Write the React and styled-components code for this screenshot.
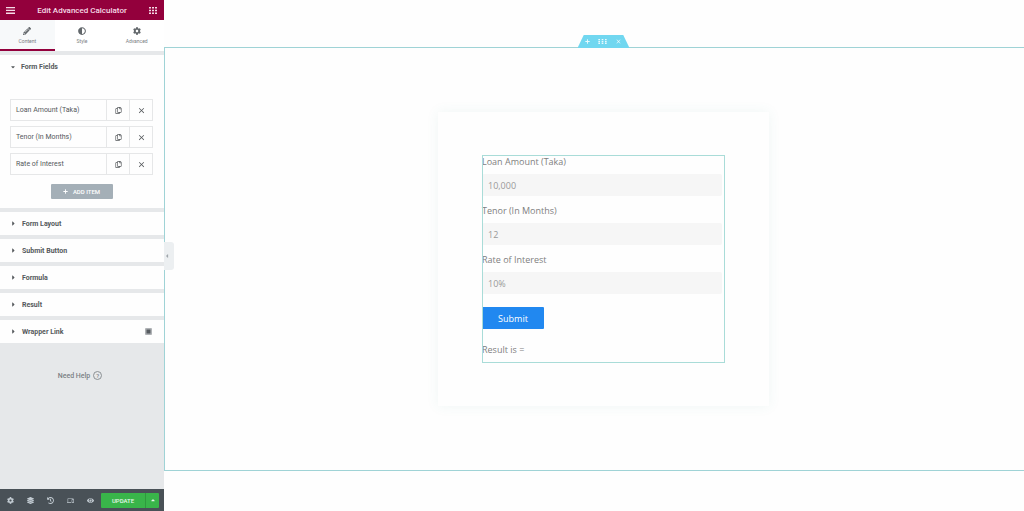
import React from "react";
import styled, { createGlobalStyle } from "styled-components";
import {
  FaAdjust,
  FaCaretDown,
  FaCaretLeft,
  FaCaretRight,
  FaCaretUp,
  FaCog,
  FaEye,
  FaHistory,
  FaLayerGroup,
  FaPencilAlt,
  FaPlus,
  FaRegCopy,
} from "react-icons/fa";
import { MdClose, MdDevices } from "react-icons/md";

const fields = [
  { id: "loan", label: "Loan Amount (Taka)", value: "10,000" },
  { id: "tenor", label: "Tenor (In Months)", value: "12" },
  { id: "rate", label: "Rate of Interest", value: "10%" },
];

const tabs = [
  { label: "Content", Icon: FaPencilAlt },
  { label: "Style", Icon: FaAdjust },
  { label: "Advanced", Icon: FaCog },
];

const sections = ["Form Layout", "Submit Button", "Formula", "Result"];

const tools = [
  { label: "Settings", Icon: FaCog },
  { label: "Navigator", Icon: FaLayerGroup },
  { label: "History", Icon: FaHistory },
  { label: "Responsive Mode", Icon: MdDevices },
  { label: "Preview Changes", Icon: FaEye },
];

function MenuIcon() {
  return (
    <svg width="9" height="7" viewBox="0 0 9 7" fill="currentColor">
      <path d="M0 0h9v1.3H0zM0 2.8h9v1.3H0zM0 5.6h9v1.3H0z" />
    </svg>
  );
}

function GridIcon() {
  return (
    <svg width="8" height="7" viewBox="0 0 8 7" fill="currentColor">
      <path d="M0 0h2v1.6H0zM3 0h2v1.6H3zM6 0h2v1.6H6zM0 2.7h2v1.6H0zM3 2.7h2v1.6H3zM6 2.7h2v1.6H6zM0 5.4h2V7H0zM3 5.4h2V7H3zM6 5.4h2V7H6z" />
    </svg>
  );
}

function AddonIcon() {
  return (
    <svg width="7" height="7" viewBox="0 0 7 7">
      <rect width="7" height="7" rx="1" fill="#b0b3b6" />
      <path d="M1.5 1.5h4v4h-4z" fill="#565b60" />
    </svg>
  );
}

function Sidebar() {
  return (
    <Panel>
      <Header>
        <IconButton aria-label="Menu">
          <MenuIcon />
        </IconButton>
        <h1>Edit Advanced Calculator</h1>
        <IconButton aria-label="Widgets">
          <GridIcon />
        </IconButton>
      </Header>

      <Tabs>
        {tabs.map(({ label, Icon }, i) => (
          <Tab key={label} $active={i === 0}>
            <Icon size={8} />
            {label}
          </Tab>
        ))}
      </Tabs>

      <Sections>
        <Section>
          <SectionTitle>
            <FaCaretDown size={6} />
            Form Fields
          </SectionTitle>
          <Repeater>
            {fields.map((field) => (
              <Item key={field.id}>
                <ItemName>{field.label}</ItemName>
                <ItemTool aria-label={`Duplicate ${field.label}`}>
                  <FaRegCopy size={7} />
                </ItemTool>
                <ItemTool aria-label={`Remove ${field.label}`}>
                  <MdClose size={9} />
                </ItemTool>
              </Item>
            ))}
            <AddItem>
              <FaPlus size={5} />
              ADD ITEM
            </AddItem>
          </Repeater>
        </Section>

        {sections.map((name) => (
          <Section key={name}>
            <SectionTitle>
              <FaCaretRight size={7} />
              {name}
            </SectionTitle>
          </Section>
        ))}
        <Section>
          <SectionTitle>
            <FaCaretRight size={7} />
            <span>Wrapper Link</span>
            <AddonIcon />
          </SectionTitle>
        </Section>
      </Sections>

      <Help href="#help">
        Need Help <HelpMark>?</HelpMark>
      </Help>

      <Footer>
        {tools.map(({ label, Icon }) => (
          <FooterTool key={label} aria-label={label}>
            <Icon size={7} />
          </FooterTool>
        ))}
        <Update>UPDATE</Update>
        <UpdateMore aria-label="Save options">
          <FaCaretUp size={6} />
        </UpdateMore>
      </Footer>

      <Collapse aria-label="Hide panel">
        <FaCaretLeft size={6} />
      </Collapse>
    </Panel>
  );
}

function Calculator() {
  return (
    <Card>
      <Form onSubmit={(e) => e.preventDefault()}>
        {fields.map((field) => (
          <Field key={field.id}>
            <label htmlFor={field.id}>{field.label}</label>
            <input id={field.id} defaultValue={field.value} />
          </Field>
        ))}
        <Submit type="submit">Submit</Submit>
        <ResultText>Result is =</ResultText>
      </Form>
    </Card>
  );
}

function App() {
  return (
    <Editor>
      <GlobalStyle />
      <Sidebar />
      <Preview>
        <Canvas>
          <Handle>
            <button aria-label="Add section">
              <FaPlus size={5} />
            </button>
            <button aria-label="Edit section">
              <Dots viewBox="0 0 10 6">
                <path d="M0 0h2v1.5H0zM4 0h2v1.5H4zM8 0h2v1.5H8zM0 2.3h2v1.5H0zM4 2.3h2v1.5H4zM8 2.3h2v1.5H8zM0 4.5h2V6H0zM4 4.5h2V6H4zM8 4.5h2V6H8z" />
              </Dots>
            </button>
            <button aria-label="Delete section">
              <MdClose size={7} />
            </button>
          </Handle>
          <Calculator />
        </Canvas>
      </Preview>
    </Editor>
  );
}

const GlobalStyle = createGlobalStyle`
  * {
    box-sizing: border-box;
  }
  body {
    margin: 0;
    font-family: Roboto, sans-serif;
    background: #fefefe;
  }
  button {
    display: flex;
    align-items: center;
    justify-content: center;
    padding: 0;
    border: none;
    background: none;
    font-family: inherit;
    color: inherit;
    cursor: pointer;
  }
`;

const Editor = styled.div`
  display: flex;
  min-height: 100vh;
`;

const Panel = styled.aside`
  position: relative;
  display: flex;
  flex-direction: column;
  flex: 0 0 164px;
  background: #e6e8ea;
  color: #55595c;
`;

const Header = styled.header`
  display: flex;
  align-items: center;
  justify-content: space-between;
  height: 20px;
  padding: 0 7px 0 6px;
  background: #93003c;
  color: #f6dbe6;

  h1 {
    margin: 0;
    font-size: 8px;
    font-weight: 500;
  }
`;

const IconButton = styled.button`
  height: 20px;
`;

const Tabs = styled.nav`
  display: grid;
  grid-template-columns: repeat(3, 1fr);
  height: 31px;
  background: #fff;
`;

const Tab = styled.button`
  flex-direction: column;
  gap: 3px;
  font-size: 5px;
  line-height: 6px;
  color: #7b8084;
  border-top: 2px solid transparent;
  border-bottom: 2px solid ${(props) => (props.$active ? "#93003c" : "transparent")};
  background: ${(props) => (props.$active ? "#f7f9fa" : "#fff")};

  svg {
    color: #62676b;
  }
`;

const Sections = styled.div`
  display: flex;
  flex-direction: column;
  gap: 4px;
  padding-top: 4px;
`;

const Section = styled.section`
  background: #fefefe;
`;

const SectionTitle = styled.button`
  justify-content: flex-start;
  gap: 5px;
  width: 100%;
  height: 23px;
  padding: 0 12px 0 10px;
  font-size: 7px;
  font-weight: 700;

  span {
    flex: 1;
    text-align: left;
  }
`;

const Repeater = styled.div`
  display: flex;
  flex-direction: column;
  gap: 5px;
  padding: 21px 11px 9px 10px;
`;

const Item = styled.div`
  display: flex;
  height: 22px;
  border: 1px solid #e6e7e8;
`;

const ItemName = styled.button`
  flex: 1;
  justify-content: flex-start;
  padding-left: 5px;
  font-size: 7px;
`;

const ItemTool = styled.button`
  width: 23px;
  border-left: 1px solid #e6e7e8;
`;

const AddItem = styled.button`
  gap: 5px;
  align-self: center;
  width: 62px;
  height: 15px;
  margin-top: 4px;
  border-radius: 1px;
  background: #a4afb7;
  color: #fff;
  font-size: 6px;
  font-weight: 500;
`;

const Help = styled.a`
  display: flex;
  align-items: center;
  justify-content: center;
  gap: 3px;
  padding: 28px 8px;
  margin-right: 4px;
  color: #7b8084;
  font-size: 7px;
  font-weight: 500;
  text-decoration: none;
`;

const HelpMark = styled.span`
  width: 9px;
  height: 9px;
  border: 1px solid #8b9094;
  border-radius: 50%;
  font-size: 6px;
  line-height: 7px;
  text-align: center;
`;

const Footer = styled.footer`
  display: flex;
  align-items: center;
  height: 22px;
  margin-top: auto;
  padding-right: 5px;
  background: #495157;
  color: #c2cbd2;
`;

const FooterTool = styled.button`
  flex: 1;
  height: 22px;
`;

const Update = styled.button`
  width: 44px;
  height: 15px;
  border-radius: 1px 0 0 1px;
  background: #39b54a;
  color: #e6f7e9;
  font-size: 6px;
  font-weight: 500;
`;

const UpdateMore = styled.button`
  width: 14px;
  height: 15px;
  border-left: 1px solid #2f9a3e;
  border-radius: 0 1px 1px 0;
  background: #39b54a;
  color: #e6f7e9;
`;

/* sits over the edge of the preview */
const Collapse = styled.button`
  position: absolute;
  top: 50%;
  left: 100%;
  z-index: 2;
  width: 10px;
  height: 28px;
  margin-top: -14px;
  padding-right: 4px;
  border-radius: 0 3px 3px 0;
  background: #eceff1;
  color: #a0a6ab;
`;

const Preview = styled.main`
  display: flex;
  flex: 1;
  padding: 47px 0 40px;
  font-family: "Open Sans", sans-serif;
`;

const Canvas = styled.section`
  position: relative;
  display: flex;
  flex: 1;
  align-items: center;
  justify-content: center;
  padding: 0 0 0 18px;
  border: 1px solid #9fd3d6;
  border-right: none;
`;

const Handle = styled.div`
  position: absolute;
  bottom: 100%;
  left: calc(50% + 9px);
  display: flex;
  align-items: center;
  justify-content: center;
  gap: 8px;
  width: 52px;
  height: 13px;
  margin-left: -26px;
  background: #71d7f0;
  clip-path: polygon(12% 0, 88% 0, 100% 100%, 0 100%);
  color: #e9fafe;
`;

const Dots = styled.svg`
  width: 9px;
  height: 5px;
  fill: currentColor;
`;

const Card = styled.div`
  width: 331px;
  padding: 43px 44px;
  background: #fefefe;
  box-shadow: 0 0 12px rgba(60, 150, 140, 0.08);
`;

const Form = styled.form`
  display: flex;
  flex-direction: column;
  align-items: flex-start;
  outline: 1px solid #a9dcd8;
  outline-offset: -1px;
  color: #7f7f7f;
  font-size: 9px;
`;

const Field = styled.div`
  display: flex;
  flex-direction: column;
  width: 100%;
  padding-right: 3px;
  margin-bottom: 8px;

  label {
    line-height: 14px;
    margin-bottom: 5px;
  }
  input {
    width: 100%;
    height: 22px;
    padding: 0 6px;
    border: none;
    border-radius: 2px;
    background: #f6f6f6;
    color: #999;
    font: inherit;
  }
`;

const Submit = styled.button`
  width: 62px;
  height: 22px;
  margin-top: 5px;
  border-radius: 1px;
  background: #2188f0;
  color: #fff;
  font-size: 9px;
`;

const ResultText = styled.p`
  margin: 14px 0 6px;
  line-height: 14px;
`;

export default App;
